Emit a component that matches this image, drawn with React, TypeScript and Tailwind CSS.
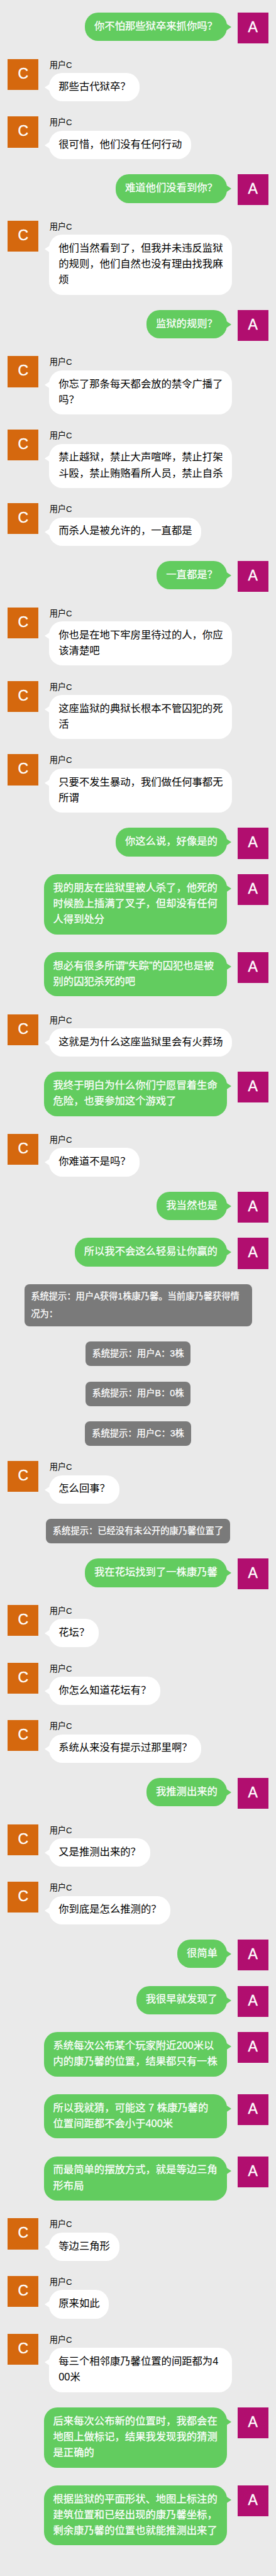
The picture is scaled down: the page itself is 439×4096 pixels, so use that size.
type Message = { from: "A" | "C" | "system"; lines: string[] };

const a = (...lines: string[]): Message => ({ from: "A", lines });
const c = (...lines: string[]): Message => ({ from: "C", lines });
const sys = (...lines: string[]): Message => ({ from: "system", lines });

const messages: Message[] = [
  a("你不怕那些狱卒来抓你吗？"),
  c("那些古代狱卒？"),
  c("很可惜，他们没有任何行动"),
  a("难道他们没看到你？"),
  c("他们当然看到了，但我并未违反监狱", "的规则，他们自然也没有理由找我麻", "烦"),
  a("监狱的规则？"),
  c("你忘了那条每天都会放的禁令广播了", "吗？"),
  c("禁止越狱，禁止大声喧哗，禁止打架", "斗殴，禁止贿赂看所人员，禁止自杀"),
  c("而杀人是被允许的，一直都是"),
  a("一直都是？"),
  c("你也是在地下牢房里待过的人，你应", "该清楚吧"),
  c("这座监狱的典狱长根本不管囚犯的死", "活"),
  c("只要不发生暴动，我们做任何事都无", "所谓"),
  a("你这么说，好像是的"),
  a("我的朋友在监狱里被人杀了，他死的", "时候脸上插满了叉子，但却没有任何", "人得到处分"),
  a("想必有很多所谓“失踪”的囚犯也是被", "别的囚犯杀死的吧"),
  c("这就是为什么这座监狱里会有火葬场"),
  a("我终于明白为什么你们宁愿冒着生命", "危险，也要参加这个游戏了"),
  c("你难道不是吗？"),
  a("我当然也是"),
  a("所以我不会这么轻易让你赢的"),
  sys("系统提示：用户A获得1株康乃馨。当前康乃馨获得情", "况为："),
  sys("系统提示：用户A：3株"),
  sys("系统提示：用户B：0株"),
  sys("系统提示：用户C：3株"),
  c("怎么回事？"),
  sys("系统提示：已经没有未公开的康乃馨位置了"),
  a("我在花坛找到了一株康乃馨"),
  c("花坛？"),
  c("你怎么知道花坛有？"),
  c("系统从来没有提示过那里啊？"),
  a("我推测出来的"),
  c("又是推测出来的？"),
  c("你到底是怎么推测的？"),
  a("很简单"),
  a("我很早就发现了"),
  a("系统每次公布某个玩家附近200米以", "内的康乃馨的位置，结果都只有一株"),
  a("所以我就猜，可能这 7 株康乃馨的", "位置间距都不会小于400米"),
  a("而最简单的摆放方式，就是等边三角", "形布局"),
  c("等边三角形"),
  c("原来如此"),
  c("每三个相邻康乃馨位置的间距都为4", "00米"),
  a("后来每次公布新的位置时，我都会在", "地图上做标记，结果我发现我的猜测", "是正确的"),
  a("根据监狱的平面形状、地图上标注的", "建筑位置和已经出现的康乃馨坐标，", "剩余康乃馨的位置也就能推测出来了"),
];

function Lines({ lines }: { lines: string[] }) {
  return (
    <>
      {lines.map((line) => (
        <span key={line} className="block whitespace-pre">
          {line}
        </span>
      ))}
    </>
  );
}

function Avatar({ letter }: { letter: "A" | "C" }) {
  return (
    <div
      className={`flex h-[49.1px] w-[49.1px] shrink-0 justify-center text-[23px] leading-[46px] text-white [-webkit-text-stroke:0.4px_white] ${
        letter === "A" ? "bg-[#b10e6f]" : "bg-[#d5680e]"
      }`}
    >
      {letter}
    </div>
  );
}

function SentMessage({ lines }: { lines: string[] }) {
  return (
    <div className="flex items-start justify-end pr-[12.2px] pb-[28.25px]">
      <div
        className={`relative rounded-[21px] bg-[#62cc5f] px-[14.8px] pt-[8.8px] pb-[11.3px] text-[16.33px] leading-[25.2px] text-white [-webkit-text-stroke:0.25px_white] ${
          lines.length > 1 ? "w-[291px]" : ""
        }`}
      >
        <Lines lines={lines} />
        <svg viewBox="0 0 10 14" className="absolute top-[16px] right-[-7.3px] h-[14px] w-[10px]">
          <path d="M0 0.2 L10 7 L0 13.8 Z" fill="#62cc5f" />
        </svg>
      </div>
      <div className="ml-[17px] h-[45px]">
        <Avatar letter="A" />
      </div>
    </div>
  );
}

function ReceivedMessage({ lines }: { lines: string[] }) {
  return (
    <div className="flex items-start pb-[24.15px] pl-[12.3px]">
      <Avatar letter="C" />
      <div className="ml-[17.1px]">
        <div className="h-[22.3px] pl-[0.2px] text-[13.2px] leading-[20px] text-black">用户C</div>
        <div
          className={`relative w-fit rounded-[21px] bg-white px-[14.8px] pt-[8.8px] pb-[11.3px] text-[16.33px] leading-[25.2px] text-black ${
            lines.length > 1 ? "min-w-[291px]" : ""
          }`}
        >
          <Lines lines={lines} />
          <svg viewBox="0 0 10 14" className="absolute top-[16px] left-[-7.3px] h-[14px] w-[10px]">
            <path d="M10 0.2 L0 7 L10 13.8 Z" fill="#fff" />
          </svg>
        </div>
      </div>
    </div>
  );
}

function SystemNotice({ lines }: { lines: string[] }) {
  return (
    <div className="flex justify-center pb-[24.3px]">
      <div
        className={`rounded-[8px] bg-[#7a7a7a] px-[10.7px] pt-[4.6px] pb-[6.2px] text-[14.29px] leading-[28.2px] text-white [-webkit-text-stroke:0.25px_white] ${
          lines.length > 1 ? "w-[362px]" : ""
        }`}
      >
        <Lines lines={lines} />
      </div>
    </div>
  );
}

export default function App() {
  return (
    <main
      lang="zh-CN"
      className="h-[4096px] w-[439px] overflow-hidden bg-[#eaeaea] pt-[20.2px] font-['Liberation_Sans','Noto_Sans_CJK_SC',sans-serif]"
    >
      {messages.map((message, index) =>
        message.from === "A" ? (
          <SentMessage key={index} lines={message.lines} />
        ) : message.from === "C" ? (
          <ReceivedMessage key={index} lines={message.lines} />
        ) : (
          <SystemNotice key={index} lines={message.lines} />
        ),
      )}
    </main>
  );
}
